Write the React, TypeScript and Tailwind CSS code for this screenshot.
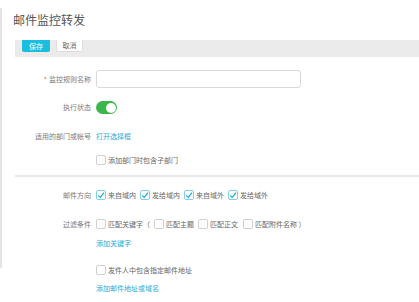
import React from "react";

const Check = ({ checked = false }: { checked?: boolean }) => (
  <span
    className={`w-[10px] h-[10px] rounded-[2px] border flex items-center justify-center bg-white shrink-0 ${
      checked ? "border-[#86cde9]" : "border-[#cfcfcf]"
    }`}
  >
    {checked && (
      <svg viewBox="0 0 10 10" className="w-[8px] h-[8px]">
        <polyline points="1.5,5.5 4,8 8.8,2" fill="none" stroke="#16aee0" strokeWidth="1.5" />
      </svg>
    )}
  </span>
);

const Label = ({ children }: { children: React.ReactNode }) => (
  <div className="w-[81px] pr-[5px] text-right text-[7px] leading-none text-[#7a7a7a] shrink-0">{children}</div>
);

const Row = ({ className, label, children }: { className: string; label?: React.ReactNode; children: React.ReactNode }) => (
  <div className={`flex items-center ${className}`}>
    <Label>{label}</Label>
    <div className="flex items-center">{children}</div>
  </div>
);

const Opt = ({ text, checked, gap }: { text: string; checked?: boolean; gap: string }) => (
  <div className={`flex items-center ${gap}`}>
    <Check checked={checked} />
    <span className="ml-[2px] text-[7px] leading-none text-[#666]">{text}</span>
  </div>
);

export default function App() {
  return (
    <div
      className="w-[419px] h-[302px] bg-white flex overflow-hidden"
      style={{ fontFamily: '"Noto Sans CJK SC", "Noto Sans", sans-serif' }}
    >
      {/* outer scroll strip */}
      <div className="w-[3px] pt-[8px] pb-[34px] flex shrink-0">
        <div className="w-[2px] bg-[#e4e4e4]" />
      </div>

      <div className="flex-1 flex flex-col">
        <div className="h-[40px] pl-[10px] pt-[14px]">
          <h1 className="text-[12px] leading-none text-[#555] font-normal">邮件监控转发</h1>
        </div>

        <div className="pl-[12px] flex flex-col">
          {/* toolbar */}
          <div className="h-[17px] bg-[#ebebeb] pl-[7px] flex items-start gap-[6px]">
            <button className="w-[28px] h-[12px] rounded-b-[2px] bg-[#1bbede] text-white text-[7px] leading-none">保存</button>
            <button className="w-[27px] h-[12px] rounded-b-[2px] bg-white border border-t-0 border-[#dcdcdc] text-[#666] text-[7px] leading-none">
              取消
            </button>
          </div>

          <Row
            className="mt-[13px] h-[18px]"
            label={
              <>
                <span className="text-[#f05a4a] mr-[2px]">*</span>监控规则名称
              </>
            }
          >
            <div className="w-[205px] h-[18px] rounded-[3px] border border-[#d9d9d9]" />
          </Row>

          <Row className="mt-[13px] h-[13px]" label="执行状态">
            <div className="w-[21px] h-[13px] rounded-full bg-[#3cb54a] flex items-center justify-end pr-[1.5px]">
              <div className="w-[10px] h-[10px] rounded-full bg-white" />
            </div>
          </Row>

          <Row className="mt-[16px] h-[12px]" label="适用的部门或帐号">
            <span className="text-[7px] leading-none text-[#26a9dc]">打开选择框</span>
          </Row>

          <Row className="mt-[13px] h-[10px]">
            <Opt text="添加部门时包含子部门" gap="" />
          </Row>

          <div className="mt-[10px] h-[2px] bg-[#e8e8e8]" />

          <Row className="mt-[13px] h-[10px]" label="邮件方向">
            <Opt text="来自域内" checked gap="" />
            <Opt text="发给域内" checked gap="ml-[4px]" />
            <Opt text="来自域外" checked gap="ml-[4px]" />
            <Opt text="发给域外" checked gap="ml-[4px]" />
          </Row>

          <Row className="mt-[19px] h-[10px]" label="过滤条件">
            <Opt text="匹配关键字（" gap="" />
            <Opt text="匹配主题" gap="ml-[4px]" />
            <Opt text="匹配正文" gap="ml-[4px]" />
            <Opt text="匹配附件名称 ）" gap="ml-[5px]" />
          </Row>

          <Row className="mt-[9px] h-[10px]">
            <span className="text-[7px] leading-none text-[#26a9dc]">添加关键字</span>
          </Row>

          <Row className="mt-[17px] h-[10px]">
            <Opt text="发件人中包含指定邮件地址" gap="" />
          </Row>

          <Row className="mt-[8px] h-[10px]">
            <span className="text-[7px] leading-none text-[#26a9dc]">添加邮件地址或域名</span>
          </Row>
        </div>
      </div>
    </div>
  );
}
